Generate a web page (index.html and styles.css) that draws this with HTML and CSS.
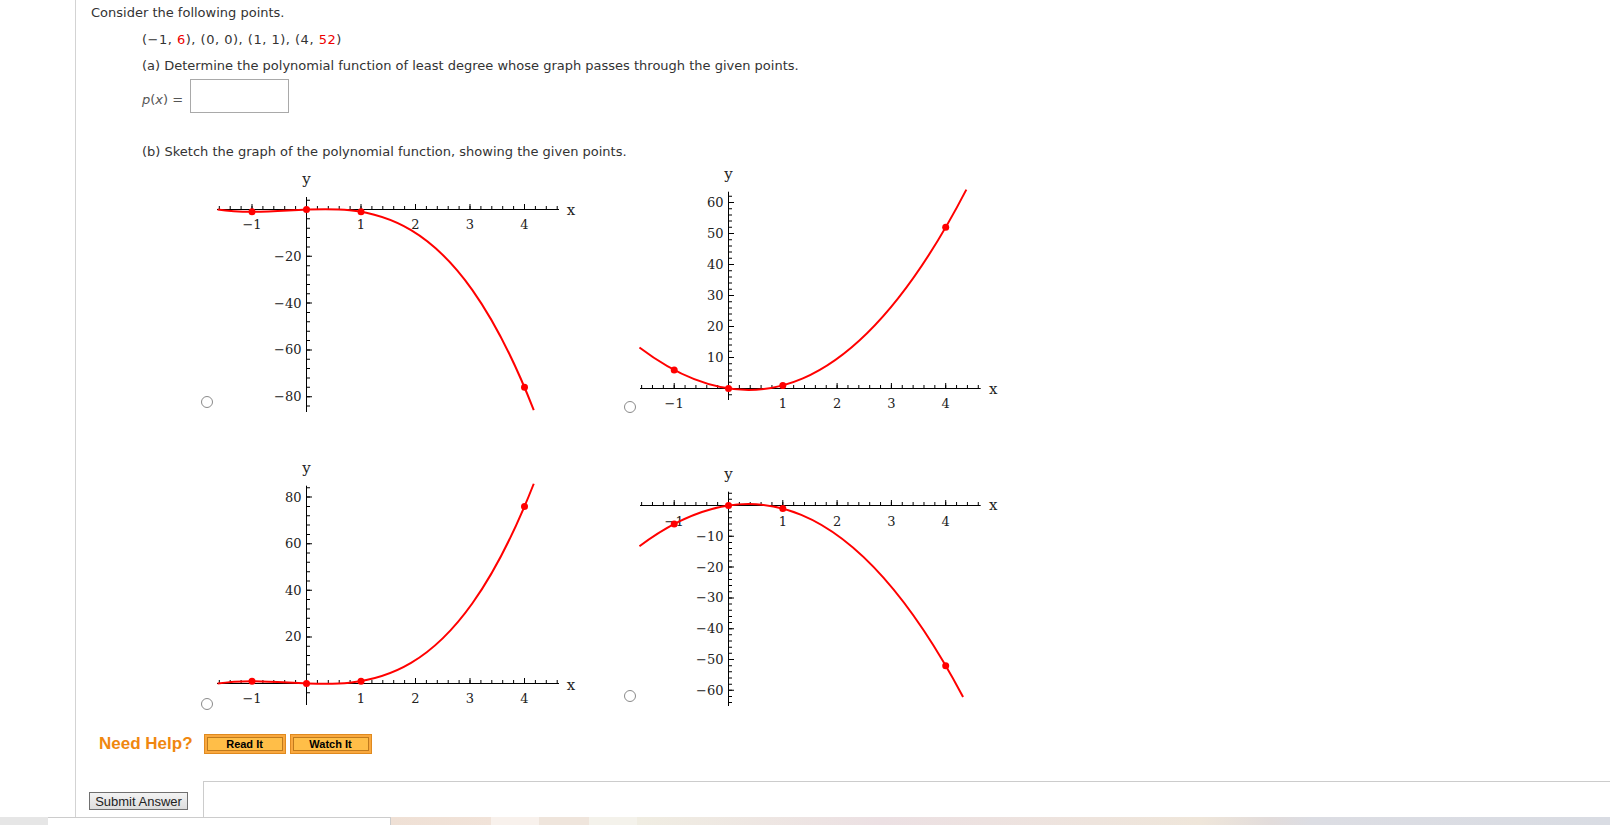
FILE: index.html
```html
<!DOCTYPE html>
<html>
<head>
<meta charset="utf-8">
<title>Polynomial question</title>
<link rel="stylesheet" href="styles.css">
</head>
<body>
<div class="page">
  <div class="main">
    <p class="intro">Consider the following points.</p>
    <div class="indent">
      <p class="pts">(−1, <span class="red">6</span>), (0, 0), (1, 1), (4, <span class="red">52</span>)</p>
      <p class="qa">(a) Determine the polynomial function of least degree whose graph passes through the given points.</p>
      <div class="answer"><span class="px"><i>p</i>(<i>x</i>) =</span><span class="box"></span></div>
      <p class="qb">(b) Sketch the graph of the polynomial function, showing the given points.</p>
      <div class="choices">
        <label class="opt"><input class="radio" type="radio" name="g">
          <svg class="plot" width="370" height="247" viewBox="0 0 370 247">
            <path class="axis" d="M2 44.5H344M91.5 32V247"/>
            <path class="tick" d="M3.8 42.5H343" stroke-width="3" stroke-dasharray="1 9.9"/>
            <path class="tick" d="M36.5 41.5H311" stroke-width="5" stroke-dasharray="1 53.5"/>
            <path class="tick" d="M93.5 34.64V242" stroke-width="3" stroke-dasharray="1 8.36"/>
            <path class="tick" d="M94.5 44V233" stroke-width="5" stroke-dasharray="1 45.8"/>
            <g class="lbl">
              <text x="37" y="64" text-anchor="middle">−1</text>
              <text x="146" y="64" text-anchor="middle">1</text>
              <text x="200.5" y="64" text-anchor="middle">2</text>
              <text x="255" y="64" text-anchor="middle">3</text>
              <text x="309.5" y="64" text-anchor="middle">4</text>
              <text x="86.5" y="95.8" text-anchor="end">−20</text>
              <text x="86.5" y="142.6" text-anchor="end">−40</text>
              <text x="86.5" y="189.4" text-anchor="end">−60</text>
              <text x="86.5" y="236.2" text-anchor="end">−80</text>
            </g>
            <text class="axl" x="91.5" y="19" text-anchor="middle">y</text>
            <text class="axl" x="351.7" y="50">x</text>
            <g transform="translate(91.5 44.5) scale(54.5 -2.34)"><path class="curve" d="M-1.63 0.0438C0.3033 -7.130 2.2367 29.316 4.17 -85.731"/></g>
            <g class="dots"><circle cx="37" cy="46.84" r="3.5"/><circle cx="91.5" cy="44.5" r="3.5"/><circle cx="146" cy="46.84" r="3.5"/><circle cx="309.5" cy="222.34" r="3.5"/></g>
          </svg>
        </label>
        <label class="opt"><input class="radio" type="radio" name="g">
          <svg class="plot" width="370" height="252" viewBox="0 0 370 252">
            <path class="axis" d="M2 223.5H342.7M90.5 26.7V235"/>
            <path class="tick" d="M3.12 221.5H342" stroke-width="3" stroke-dasharray="1 9.86"/>
            <path class="tick" d="M35.7 220.5H309" stroke-width="5" stroke-dasharray="1 53.3"/>
            <path class="tick" d="M92.5 30.8V231" stroke-width="3" stroke-dasharray="1 5.2"/>
            <path class="tick" d="M93.5 37V224.5" stroke-width="5" stroke-dasharray="1 30"/>
            <g class="lbl">
              <text x="36.2" y="243" text-anchor="middle">−1</text>
              <text x="144.8" y="243" text-anchor="middle">1</text>
              <text x="199.1" y="243" text-anchor="middle">2</text>
              <text x="253.4" y="243" text-anchor="middle">3</text>
              <text x="307.7" y="243" text-anchor="middle">4</text>
              <text x="85.5" y="197" text-anchor="end">10</text>
              <text x="85.5" y="166" text-anchor="end">20</text>
              <text x="85.5" y="135" text-anchor="end">30</text>
              <text x="85.5" y="104" text-anchor="end">40</text>
              <text x="85.5" y="73" text-anchor="end">50</text>
              <text x="85.5" y="42" text-anchor="end">60</text>
            </g>
            <text class="axl" x="90.5" y="14" text-anchor="middle">y</text>
            <text class="axl" x="351" y="229">x</text>
            <g transform="translate(90.5 223.5) scale(54.3 -3.1)"><path class="curve" d="M-1.64 13.2365C0.3667 -13.3982 2.3733 -3.6958 4.38 64.1602"/></g>
            <g class="dots"><circle cx="36.2" cy="204.9" r="3.5"/><circle cx="90.5" cy="223.5" r="3.5"/><circle cx="144.8" cy="220.4" r="3.5"/><circle cx="307.7" cy="62.3" r="3.5"/></g>
          </svg>
        </label>
        <label class="opt"><input class="radio" type="radio" name="g">
          <svg class="plot" width="370" height="259" viewBox="0 0 370 259">
            <path class="axis" d="M2 228.5H344M91.5 30.7V250"/>
            <path class="tick" d="M3.8 226.5H343" stroke-width="3" stroke-dasharray="1 9.9"/>
            <path class="tick" d="M36.5 225.5H311" stroke-width="5" stroke-dasharray="1 53.5"/>
            <path class="tick" d="M93.5 32.28V238.5" stroke-width="3" stroke-dasharray="1 8.32"/>
            <path class="tick" d="M94.5 41.6V229" stroke-width="5" stroke-dasharray="1 45.6"/>
            <g class="lbl">
              <text x="37" y="248" text-anchor="middle">−1</text>
              <text x="146" y="248" text-anchor="middle">1</text>
              <text x="200.5" y="248" text-anchor="middle">2</text>
              <text x="255" y="248" text-anchor="middle">3</text>
              <text x="309.5" y="248" text-anchor="middle">4</text>
              <text x="86.5" y="186.4" text-anchor="end">20</text>
              <text x="86.5" y="139.8" text-anchor="end">40</text>
              <text x="86.5" y="93.2" text-anchor="end">60</text>
              <text x="86.5" y="46.6" text-anchor="end">80</text>
            </g>
            <text class="axl" x="91.5" y="18" text-anchor="middle">y</text>
            <text class="axl" x="351.7" y="235">x</text>
            <g transform="translate(91.5 228.5) scale(54.5 -2.33)"><path class="curve" d="M-1.63 -0.0438C0.3033 7.130 2.2367 -29.316 4.17 85.731"/></g>
            <g class="dots"><circle cx="37" cy="226.17" r="3.5"/><circle cx="91.5" cy="228.5" r="3.5"/><circle cx="146" cy="226.17" r="3.5"/><circle cx="309.5" cy="51.42" r="3.5"/></g>
          </svg>
        </label>
        <label class="opt"><input class="radio" type="radio" name="g">
          <svg class="plot" width="370" height="251" viewBox="0 0 370 251">
            <path class="axis" d="M2 50.5H342.7M90.5 36.7V251"/>
            <path class="tick" d="M3.12 48.5H342" stroke-width="3" stroke-dasharray="1 9.86"/>
            <path class="tick" d="M35.7 47.5H309" stroke-width="5" stroke-dasharray="1 53.3"/>
            <path class="tick" d="M92.5 37.68V251" stroke-width="3" stroke-dasharray="1 5.16"/>
            <path class="tick" d="M93.5 50V236" stroke-width="5" stroke-dasharray="1 29.8"/>
            <g class="lbl">
              <text x="36.2" y="70.5" text-anchor="middle">−1</text>
              <text x="144.8" y="70.5" text-anchor="middle">1</text>
              <text x="199.1" y="70.5" text-anchor="middle">2</text>
              <text x="253.4" y="70.5" text-anchor="middle">3</text>
              <text x="307.7" y="70.5" text-anchor="middle">4</text>
              <text x="85.5" y="85.8" text-anchor="end">−10</text>
              <text x="85.5" y="116.6" text-anchor="end">−20</text>
              <text x="85.5" y="147.4" text-anchor="end">−30</text>
              <text x="85.5" y="178.2" text-anchor="end">−40</text>
              <text x="85.5" y="209" text-anchor="end">−50</text>
              <text x="85.5" y="239.8" text-anchor="end">−60</text>
            </g>
            <text class="axl" x="90.5" y="24" text-anchor="middle">y</text>
            <text class="axl" x="351" y="55">x</text>
            <g transform="translate(90.5 50.5) scale(54.3 -3.08)"><path class="curve" d="M-1.64 -13.2365C0.3467 13.1328 2.3333 3.8857 4.32 -62.1486"/></g>
            <g class="dots"><circle cx="36.2" cy="68.98" r="3.5"/><circle cx="90.5" cy="50.5" r="3.5"/><circle cx="144.8" cy="53.58" r="3.5"/><circle cx="307.7" cy="210.66" r="3.5"/></g>
          </svg>
        </label>
      </div>
    </div>
    <div class="help">
      <span class="need">Need Help?</span>
      <span class="hbtn"><span>Read It</span></span>
      <span class="hbtn"><span>Watch It</span></span>
    </div>
    <div class="submit-row">
      <button class="submit" type="button">Submit Answer</button>
      <div class="comment"></div>
    </div>
  </div>
  <div class="footer">
    <div class="f-gray"></div>
    <div class="f-white"></div>
    <div class="f-grad"></div>
  </div>
</div>
</body>
</html>
```
FILE: styles.css
```css
html, body {
  margin: 0;
  padding: 0;
  background: #fff;
}
body {
  font-family: "DejaVu Sans", Verdana, sans-serif;
  font-size: 13px;
  color: #333;
}
.page {
  width: 1610px;
  height: 825px;
  overflow: hidden;
}
.main {
  margin-left: 75px;
  border-left: 1px solid #d3d3d3;
  height: 817px;
  box-sizing: border-box;
  padding: 5px 0 0 15px;
}
p {
  margin: 0;
  line-height: 16px;
}
.indent {
  margin-left: 51px;
}
.pts {
  margin-top: 11px;
  letter-spacing: 0.5px;
}
.red {
  color: #e00;
}
.qa {
  margin-top: 10px;
}
.answer {
  margin-top: 5px;
  height: 34px;
  display: flex;
  align-items: flex-end;
}
.px {
  color: #555;
  line-height: 16px;
  margin-bottom: 5px;
  margin-right: 7px;
}
.box {
  width: 99px;
  height: 34px;
  box-sizing: border-box;
  border: 1px solid #a9a9a9;
}
.qb {
  margin-top: 31px;
}
.choices {
  margin-top: 5px;
  margin-left: 59px;
  display: grid;
  grid-template-columns: 384px 384px;
  column-gap: 39px;
  row-gap: 38px;
  align-items: start;
}
.opt {
  display: flex;
  align-items: flex-end;
  gap: 2px;
}
.radio {
  appearance: none;
  -webkit-appearance: none;
  flex: none;
  width: 12px;
  height: 12px;
  margin: 0 0 4px 0;
  box-sizing: border-box;
  border: 1px solid #8a8a8a;
  border-radius: 50%;
  background: #fff;
}
.plot {
  display: block;
  flex: none;
  overflow: visible;
}
.plot .axis {
  fill: none;
  stroke: #000;
  stroke-width: 1;
}
.plot .tick {
  fill: none;
  stroke: #000;
}
.plot .lbl text {
  font-family: "DejaVu Serif", serif;
  font-size: 13px;
  fill: #222;
}
.plot .axl {
  font-family: "DejaVu Serif", serif;
  font-size: 15px;
  fill: #222;
}
.plot .curve {
  fill: none;
  stroke: #f00;
  stroke-width: 2;
  vector-effect: non-scaling-stroke;
}
.plot .dots circle {
  fill: #f00;
}
.help {
  margin-top: 20px;
  margin-left: 8px;
  height: 20px;
  display: flex;
  align-items: center;
}
.need {
  font-family: "Liberation Sans", Arial, sans-serif;
  font-weight: bold;
  font-size: 17px;
  color: #f0870f;
  margin-right: 11px;
}
.hbtn {
  display: flex;
  width: 82px;
  height: 20px;
  box-sizing: border-box;
  border: 1px solid #e08a1f;
  background: #f9a83e;
  padding: 2px;
  margin-right: 4px;
}
.hbtn span {
  flex: 1;
  display: flex;
  align-items: center;
  justify-content: center;
  border: 1px solid #c07a1c;
  background: #ffbe48;
  font-family: "Liberation Sans", Arial, sans-serif;
  font-weight: bold;
  font-size: 11px;
  color: #000;
}
.submit-row {
  margin-top: 27px;
  height: 36px;
  display: flex;
}
.submit {
  margin: 11px 0 0 -2px;
  width: 99px;
  height: 18px;
  padding: 0;
  box-sizing: border-box;
  border: 1px solid #707070;
  background: linear-gradient(#f3f3f3, #dddddd);
  font-family: "Liberation Sans", Arial, sans-serif;
  font-size: 13px;
  color: #222;
}
.comment {
  flex: 1;
  margin-left: 15px;
  border-top: 1px solid #cccccc;
  border-left: 1px solid #cccccc;
}
.footer {
  display: flex;
  height: 8px;
}
.f-gray {
  width: 48px;
  background: #e6e6e6;
}
.f-white {
  width: 343px;
  box-sizing: border-box;
  border-top: 1px solid #cccccc;
  border-right: 1px solid #cccccc;
  background: #fff;
}
.f-grad {
  flex: 1;
  background: linear-gradient(to right,
    #efe0d5 0, #f1e3d9 100px,
    #f8f1ec 100px, #f8f1ec 148px,
    #efe5dc 148px, #efe5dc 198px,
    #f4f2eb 198px, #f4f2eb 246px,
    #f0ede2 246px, #ece0e3 490px,
    #efe6da 810px, #e2dcdb 880px,
    #dcdde3 920px, #d9dce3 1219px);
}
```
